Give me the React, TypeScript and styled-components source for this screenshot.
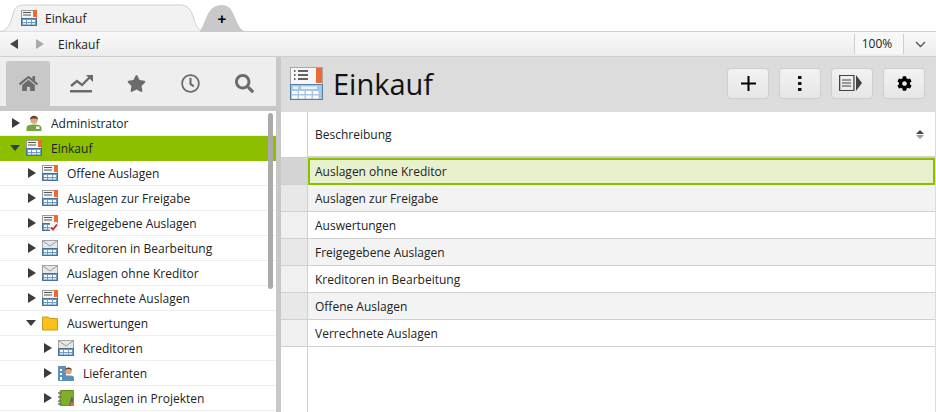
import React from 'react';
import styled, { createGlobalStyle } from 'styled-components';
import { FaCog, FaHome, FaRegClock, FaSearch, FaStar } from 'react-icons/fa';

const GlobalStyle = createGlobalStyle`
  html, body {
    margin: 0;
    padding: 0;
    background: #fff;
    overflow: hidden;
  }
  * {
    box-sizing: border-box;
  }
  body {
    font-family: "Open Sans", "Noto Sans", "Liberation Sans", sans-serif;
    font-size: 12px;
    color: #222;
  }
`;

const Page = styled.div`
  width: 936px;
  height: 412px;
  display: flex;
  flex-direction: column;
  overflow: hidden;
`;

const TabBar = styled.div`
  height: 32px;
  flex: none;
  display: flex;
  align-items: flex-end;
  border-bottom: 1px solid #cfcfcf;
`;
const TabShape = styled.div`
  position: relative;
  flex: none;
  height: 28px;
  margin-bottom: -1px;
`;
const TabArt = styled.svg`
  position: absolute;
  left: 0;
  top: 0;
`;
const ActiveTab = styled(TabShape)`
  width: 204px;
  display: flex;
  align-items: center;
  gap: 8px;
  padding: 0 0 0 21px;
`;
const AddTab = styled(TabShape)`
  width: 44px;
  margin-left: -4px;
  display: flex;
  align-items: center;
  justify-content: center;
  font-family: "Liberation Sans", sans-serif;
  font-weight: 700;
  font-size: 15px;
  color: #000;
`;
const TabLabel = styled.span`
  position: relative;
`;
const TabIconWrap = styled.span`
  position: relative;
  display: flex;
`;

const NavBar = styled.div`
  height: 25px;
  flex: none;
  display: flex;
  align-items: center;
  background: linear-gradient(#f9f9f9, #ececec);
  border-bottom: 1px solid #cfcfcf;
  padding-left: 10px;
`;
const Arrow = styled.span<{ $dir: 'left' | 'right'; $color: string; $size?: number }>`
  flex: none;
  width: 0;
  height: 0;
  border-top: ${(p) => p.$size ?? 5}px solid transparent;
  border-bottom: ${(p) => p.$size ?? 5}px solid transparent;
  ${(p) => (p.$dir === 'left' ? 'border-right' : 'border-left')}: ${(p) => (p.$size ?? 5) + 3}px solid ${(p) => p.$color};
`;
const NavArrows = styled.div`
  display: flex;
  gap: 18px;
  width: 48px;
`;
const Spacer = styled.div`
  flex: 1;
`;
const Zoom = styled.div`
  width: 50px;
  height: 20px;
  line-height: 20px;
  text-align: center;
  border-left: 1px solid #cfcfcf;
  border-right: 1px solid #cfcfcf;
  background: #f7f7f7;
  padding-right: 4px;
`;
const ZoomMenu = styled.div`
  width: 32px;
  display: flex;
  justify-content: center;
  color: #555;
`;

const Body = styled.div`
  flex: 1;
  display: flex;
  min-height: 0;
`;
const Sidebar = styled.div`
  position: relative;
  flex: none;
  width: 281px;
  border-right: 5px solid #c8c8c8;
  overflow: hidden;
`;
const ModeBar = styled.div`
  height: 54px;
  display: flex;
  padding: 4px 0 0 6px;
  background: #eeeeee;
  border-bottom: 5px solid #c8c8c8;
`;
const Mode = styled.div<{ $active?: boolean }>`
  width: 45px;
  margin-right: ${(p) => (p.$active ? 10 : 10)}px;
  display: flex;
  align-items: center;
  justify-content: center;
  color: #6b6b6b;
  font-size: 19px;
  border-radius: 3px 3px 0 0;
  background: ${(p) => (p.$active ? '#c8c8c8' : 'transparent')};
`;
const Row = styled.div<{ $depth: number; $selected?: boolean }>`
  height: 25px;
  display: flex;
  align-items: center;
  padding-left: ${(p) => 12 + p.$depth * 16}px;
  background: ${(p) => (p.$selected ? '#8cbf00' : '#fff')};
  border-bottom: 1px solid ${(p) => (p.$selected ? '#8cbf00' : '#eeeeee')};
`;
const Toggle = styled.span`
  flex: none;
  width: 14px;
  display: flex;
`;
const DownArrow = styled.span`
  width: 0;
  height: 0;
  margin-left: -2px;
  border-left: 5px solid transparent;
  border-right: 5px solid transparent;
  border-top: 6px solid #3c3c3c;
`;
const RowLabel = styled.span`
  margin-left: 9px;
  white-space: nowrap;
`;
const Scrollbar = styled.div`
  position: absolute;
  left: 268px;
  top: 56px;
  width: 5px;
  height: 176px;
  border-radius: 3px;
  background: #aaaaaa;
`;

const Main = styled.div`
  flex: 1;
  display: flex;
  flex-direction: column;
  min-width: 0;
`;
const Header = styled.div`
  height: 55px;
  flex: none;
  display: flex;
  align-items: center;
  background: #dcdcdc;
  padding: 0 11px 3px 9px;
`;
const Title = styled.h1`
  margin: 0 0 0 10px;
  font-size: 29px;
  font-weight: 400;
  color: #111;
`;
const ToolButton = styled.button`
  width: 42px;
  height: 31px;
  margin-left: 10px;
  padding: 0;
  display: flex;
  align-items: center;
  justify-content: center;
  border: 1px solid #cfcfcf;
  border-radius: 4px;
  background: linear-gradient(#f2f2f2, #e6e6e6);
  color: #000;
`;
const Table = styled.div`
  flex: 1;
  display: grid;
  grid-template-columns: 27px 1fr;
  grid-template-rows: 46px repeat(7, 27px) 1fr;
  border-right: 1px solid #dcdcdc;
`;
const Gutter = styled.div<{ $tone: string }>`
  background: ${(p) => p.$tone};
  border-right: 1px solid #d0d0d0;
  border-bottom: 1px solid #d0d0d0;
`;
const HeadCell = styled.div`
  display: flex;
  align-items: center;
  justify-content: space-between;
  padding: 0 11px 0 7px;
  border-bottom: 2px solid #d0d0d0;
`;
const SortArrows = styled.div`
  display: flex;
  flex-direction: column;
  gap: 1px;
`;
const SortUp = styled.span`
  width: 0;
  height: 0;
  border-left: 4px solid transparent;
  border-right: 4px solid transparent;
  border-bottom: 4px solid #444;
`;
const SortDown = styled.span`
  width: 0;
  height: 0;
  border-left: 4px solid transparent;
  border-right: 4px solid transparent;
  border-top: 4px solid #999;
`;
const Cell = styled.div<{ $selected?: boolean; $alt?: boolean }>`
  display: flex;
  align-items: center;
  padding-left: ${(p) => (p.$selected ? 5 : 7)}px;
  background: ${(p) => (p.$selected ? '#e8f1cd' : p.$alt ? '#f3f3f3' : '#fff')};
  border: ${(p) => (p.$selected ? '2px solid #8cbf00' : 'none')};
  border-bottom: ${(p) => (p.$selected ? '2px solid #8cbf00' : '1px solid #d0d0d0')};
`;
const Filler = styled.div`
  border-right: 1px solid #d0d0d0;
`;

type IconKind = 'form' | 'check' | 'mail' | 'person' | 'folder' | 'notebook' | 'admin';

const Grid: React.FC = () => (
  <>
    <rect x="0.5" y="8.5" width="15" height="7" fill="#6f9cc4" stroke="#45719b" />
    <rect x="2" y="10" width="3" height="2" fill="#fff" />
    <rect x="6" y="10" width="4" height="2" fill="#fff" />
    <rect x="11" y="10" width="3" height="2" fill="#fff" />
    <rect x="2" y="13" width="3" height="1.5" fill="#dbe7f2" />
    <rect x="6" y="13" width="4" height="1.5" fill="#dbe7f2" />
    <rect x="11" y="13" width="3" height="1.5" fill="#dbe7f2" />
  </>
);

const Sheet: React.FC = () => (
  <>
    <rect x="0.5" y="0.5" width="15" height="8" fill="#f4f4f4" stroke="#9a9a9a" />
    <rect x="12" y="0" width="4" height="7" fill="#ec6a35" />
    <path d="M2 2.5h8M2 5h8" stroke="#555" strokeWidth="1" />
  </>
);

const TreeIcon: React.FC<{ kind: IconKind; size?: number }> = ({ kind, size = 16 }) => (
  <svg width={size} height={size} viewBox="0 0 16 16" style={{ flex: 'none' }}>
    {kind === 'form' && (
      <>
        <Sheet />
        <Grid />
      </>
    )}
    {kind === 'check' && (
      <>
        <Sheet />
        <Grid />
        <rect x="8" y="8" width="8" height="8" fill="#f4f4f4" />
        <path d="M9 12.5l2 2 4-5" fill="none" stroke="#c9242b" strokeWidth="1.8" />
      </>
    )}
    {kind === 'mail' && (
      <>
        <rect x="0.5" y="0.5" width="15" height="9" fill="#e6e6e6" stroke="#a4a4a4" />
        <path d="M1 1l7 5 7-5" fill="none" stroke="#9a9a9a" />
        <Grid />
      </>
    )}
    {kind === 'folder' && (
      <>
        <path d="M0.5 3.5v-1.5h6l1 1.500h8v11.500h-15z" fill="#fdc017" stroke="#c99a1d" />
      </>
    )}
    {kind === 'person' && (
      <>
        <rect x="0" y="1" width="8" height="15" fill="#5f8fb8" />
        <path d="M2 4h2v2H2zM2 8h2v2H2zM2 12h2v3H2z" fill="#fff" />
        <path d="M5 16v-3.500c0-1.500 2-2 5.500-2s5.500 .5 5.500 2V16z" fill="#5e8fb4" />
        <circle cx="10.500" cy="6" r="3.300" fill="#dca681" />
        <path d="M7 5.500c0-4 7-4 7 0-1-2-6-2-7 0z" fill="#6a3f22" />
      </>
    )}
    {kind === 'notebook' && (
      <>
        <rect x="2" y="0.500" width="14" height="15.500" rx="1" fill="#7fae27" stroke="#5f8a1a" />
        <path d="M0 3h4M0 7h4M0 11h4M0 14h4" stroke="#777" strokeWidth="1.500" />
        <path d="M11 16l2-9 2 1v8z" fill="#666" />
        <rect x="12.500" y="12.500" width="3.500" height="3.500" fill="#ec6a35" />
      </>
    )}
    {kind === 'admin' && (
      <>
        <path d="M0.500 16v-3c0-2.500 3-3.500 7.500-3.500s7.500 1 7.500 3.500v3z" fill="#71a63a" />
        <circle cx="8" cy="5" r="3.700" fill="#dca681" />
        <path d="M4 4.500c0-5 8-5 8 0-1.500-1.500-6.500-1.500-8 0z" fill="#6a3f22" />
        <rect x="10" y="11.500" width="3.500" height="2.500" fill="#fff" />
      </>
    )}
  </svg>
);

const TrendIcon: React.FC = () => (
  <svg width="24" height="20" viewBox="0 0 24 20">
    <path d="M1 12l6-5 5 4 8-8" fill="none" stroke="#6b6b6b" strokeWidth="2.400" />
    <path d="M16 1h7v7z" fill="#6b6b6b" />
    <rect x="0" y="16" width="22" height="2.500" fill="#6b6b6b" />
  </svg>
);

const LargeListIcon: React.FC = () => (
  <svg width="33" height="33" viewBox="0 0 33 33">
    <rect x="0.500" y="0.500" width="32" height="32" fill="#f6f6f6" stroke="#a8a8a8" />
    <rect x="26" y="1" width="6" height="15" fill="#ec6a35" />
    <path d="M4 4h1.500M4 8h1.500M4 12h1.500M8 4h10M8 8h10M8 12h10" stroke="#333" strokeWidth="1.500" />
    <rect x="0.500" y="17.500" width="32" height="15" fill="#a9c6de" stroke="#4f7ea8" />
    <path d="M3 19.500h5v2.500H3zM11 19.500h16v2.500H11z" fill="#e9f1f7" />
    <path d="M2 24h5.500v3H2zM9 24h5.500v3H9zM16 24h5.500v3H16zM23 24h5.500v3H23zM2 28.500h5.500v3H2zM9 28.500h5.500v3H9zM16 28.500h5.500v3H16zM23 28.500h5.500v3H23z" fill="#fff" />
  </svg>
);

const PanelIcon: React.FC = () => (
  <svg width="26" height="17" viewBox="0 0 26 17">
    <rect x="0.500" y="0.500" width="11" height="15" transform="scale(1.300 1)" fill="none" stroke="#444" />
    <path d="M3 5h9M3 8h9M3 11h9" stroke="#444" />
    <path d="M17 0l6 8-6 8z" fill="#444" />
  </svg>
);

const TREE: { label: string; kind: IconKind; depth: number; open?: boolean; selected?: boolean }[] = [
  { label: 'Administrator', kind: 'admin', depth: 0 },
  { label: 'Einkauf', kind: 'form', depth: 0, open: true, selected: true },
  { label: 'Offene Auslagen', kind: 'form', depth: 1 },
  { label: 'Auslagen zur Freigabe', kind: 'form', depth: 1 },
  { label: 'Freigegebene Auslagen', kind: 'check', depth: 1 },
  { label: 'Kreditoren in Bearbeitung', kind: 'mail', depth: 1 },
  { label: 'Auslagen ohne Kreditor', kind: 'mail', depth: 1 },
  { label: 'Verrechnete Auslagen', kind: 'form', depth: 1 },
  { label: 'Auswertungen', kind: 'folder', depth: 1, open: true },
  { label: 'Kreditoren', kind: 'mail', depth: 2 },
  { label: 'Lieferanten', kind: 'person', depth: 2 },
  { label: 'Auslagen in Projekten', kind: 'notebook', depth: 2 },
];

const ROWS = [
  'Auslagen ohne Kreditor',
  'Auslagen zur Freigabe',
  'Auswertungen',
  'Freigegebene Auslagen',
  'Kreditoren in Bearbeitung',
  'Offene Auslagen',
  'Verrechnete Auslagen',
];

const App: React.FC = () => (
  <Page>
    <GlobalStyle />
    <TabBar>
      <ActiveTab>
        <TabArt width="204" height="28" viewBox="0 0 204 28">
          <path
            d="M0 27.500C8 27.500 11 18 13 10 14.500 4 17 1 24 1H180C188 1 191 6 193 12 195 20 198 27.500 204 27.500V28H0z"
            fill="#f2f2f2"
            stroke="#cfcfcf"
          />
        </TabArt>
        <TabIconWrap>
          <TreeIcon kind="form" />
        </TabIconWrap>
        <TabLabel>Einkauf</TabLabel>
      </ActiveTab>
      <AddTab>
        <TabArt width="44" height="28" viewBox="0 0 44 28">
          <path d="M0 27C6 20 6 1 22 1 36 1 34 22 44 27v1H0z" fill="#c9c9c9" />
        </TabArt>
        <TabLabel>+</TabLabel>
      </AddTab>
    </TabBar>
    <NavBar>
      <NavArrows>
        <Arrow $dir="left" $color="#444" />
        <Arrow $dir="right" $color="#aaa" />
      </NavArrows>
      <span>Einkauf</span>
      <Spacer />
      <Zoom>100%</Zoom>
      <ZoomMenu>
        <svg width="11" height="7" viewBox="0 0 11 7">
          <path d="M1 1l4.500 4.500L10 1" fill="none" stroke="#555" strokeWidth="1.400" />
        </svg>
      </ZoomMenu>
    </NavBar>
    <Body>
      <Sidebar>
        <ModeBar>
          <Mode $active>
            <FaHome />
          </Mode>
          <Mode>
            <TrendIcon />
          </Mode>
          <Mode>
            <FaStar />
          </Mode>
          <Mode>
            <FaRegClock />
          </Mode>
          <Mode>
            <FaSearch />
          </Mode>
        </ModeBar>
        {TREE.map((item) => (
          <Row key={item.label} $depth={item.depth} $selected={item.selected}>
            <Toggle>{item.open ? <DownArrow /> : <Arrow $dir="right" $color="#3c3c3c" />}</Toggle>
            <TreeIcon kind={item.kind} />
            <RowLabel>{item.label}</RowLabel>
          </Row>
        ))}
        <Scrollbar />
      </Sidebar>
      <Main>
        <Header>
          <LargeListIcon />
          <Title>Einkauf</Title>
          <Spacer />
          <ToolButton>
            <svg width="15" height="15" viewBox="0 0 15 15">
              <path d="M7.500 0v15M0 7.500h15" stroke="#000" strokeWidth="2" />
            </svg>
          </ToolButton>
          <ToolButton>
            <svg width="4" height="15" viewBox="0 0 4 15">
              <path d="M0 0h3.500v3H0zM0 6h3.500v3H0zM0 12h3.500v3H0z" fill="#111" />
            </svg>
          </ToolButton>
          <ToolButton>
            <PanelIcon />
          </ToolButton>
          <ToolButton>
            <FaCog size={15} />
          </ToolButton>
        </Header>
        <Table>
          <Gutter $tone="#fff" />
          <HeadCell>
            Beschreibung
            <SortArrows>
              <SortUp />
              <SortDown />
            </SortArrows>
          </HeadCell>
          {ROWS.map((text, i) => (
            <React.Fragment key={text}>
              <Gutter $tone={i === 0 ? '#d4d4d4' : i % 2 ? '#e8e8e8' : '#f0f0f0'} />
              <Cell $selected={i === 0} $alt={i % 2 === 1}>
                {text}
              </Cell>
            </React.Fragment>
          ))}
          <Filler />
          <div />
        </Table>
      </Main>
    </Body>
  </Page>
);

export default App;
